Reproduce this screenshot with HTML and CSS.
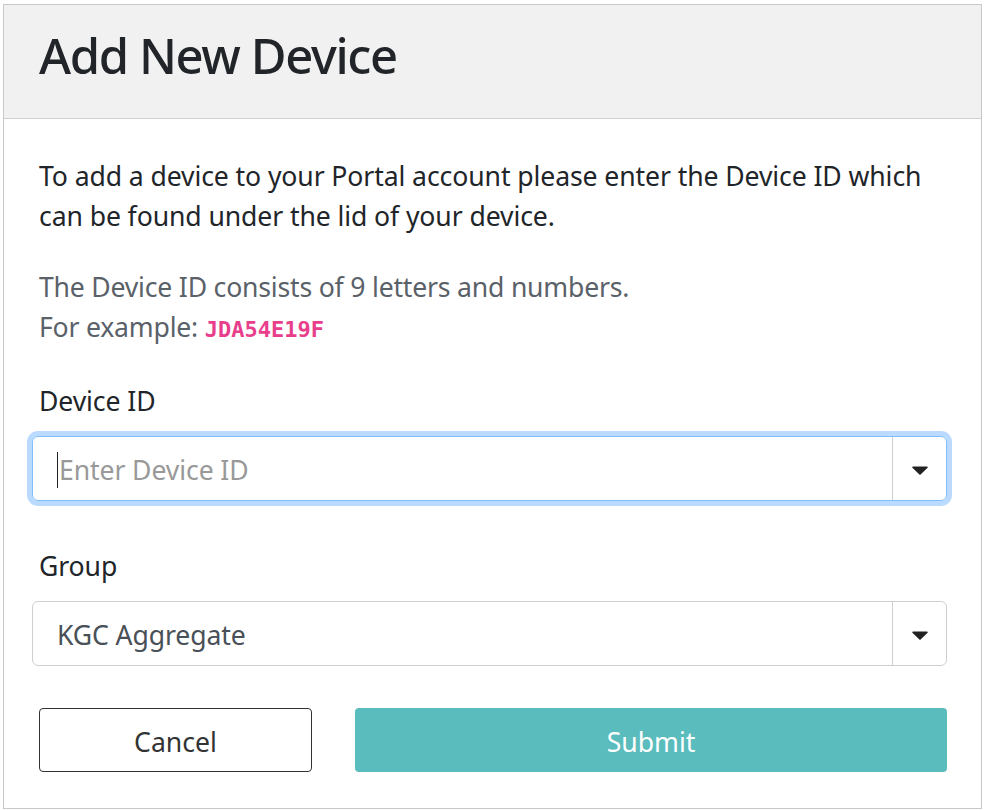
FILE: index.html
```html
<!DOCTYPE html>
<html>
<head>
    <meta name="viewport" content="width=device-width, initial-scale=1.0">
    <title>Add New Device</title>
    <link rel="stylesheet" href="styles.css">
</head>
<body>
    <div class="modal">
        <div class="modal-header">
            <h2 class="modal-title">Add New Device</h2>
        </div>
        <div class="modal-body">
            <p class="intro">To add a device to your Portal account please enter the Device ID which can be found under the lid of your device.</p>
            <p class="hint">The Device ID consists of 9 letters and numbers.<br>For example: <code>JDA54E19F</code></p>

            <div class="field">
                <label for="deviceId">Device ID</label>
                <div class="combo focused">
                    <div class="combo-input">
                        <span class="caret"></span>
                        <span class="placeholder">Enter Device ID</span>
                    </div>
                    <span class="combo-toggle">
                        <svg width="16" height="9" viewBox="0 0 16 9"><path d="M1 0.5h14a0.8 0.8 0 0 1 0.6 1.3l-7 6.6a0.9 0.9 0 0 1-1.2 0l-7-6.6A0.8 0.8 0 0 1 1 0.5z" fill="#222"/></svg>
                    </span>
                </div>
            </div>

            <div class="field">
                <label>Group</label>
                <div class="combo">
                    <div class="combo-input">
                        <span class="value">KGC Aggregate</span>
                    </div>
                    <span class="combo-toggle">
                        <svg width="16" height="9" viewBox="0 0 16 9"><path d="M1 0.5h14a0.8 0.8 0 0 1 0.6 1.3l-7 6.6a0.9 0.9 0 0 1-1.2 0l-7-6.6A0.8 0.8 0 0 1 1 0.5z" fill="#222"/></svg>
                    </span>
                </div>
            </div>

            <div class="actions">
                <button class="btn btn-cancel">Cancel</button>
                <button class="btn btn-submit">Submit</button>
            </div>
        </div>
    </div>
</body>
</html>
```

FILE: styles.css
```css
body {
    margin: 0;
    padding: 4px 0 0 3px;
    background: #fff;
    font-family: "Noto Sans", "Open Sans", sans-serif;
    color: #212529;
}
.modal {
    width: 979px;
    height: 805px;
    box-sizing: border-box;
    border: 1px solid #c8c8c8;
    background: #fff;
}
.modal-header {
    height: 114px;
    box-sizing: border-box;
    padding: 18px 0 0 35px;
    background: #f1f1f1;
    border-bottom: 1px solid #cfcfcf;
}
.modal-title {
    margin: 0;
    font-size: 49px;
    line-height: 64px;
    font-weight: 500;
    letter-spacing: -1.4px;
    color: #212529;
}
.modal-body {
    padding: 37px 34px 0 28px;
    font-size: 26.6px;
    line-height: 40px;
    letter-spacing: -0.1px;
}
.intro, .hint {
    margin: 0 0 0 7px;
}
.intro {
    margin-bottom: 31px;
}
.hint {
    color: #5a6169;
    margin-bottom: 31px;
    letter-spacing: -0.2px;
}
code {
    font-family: "DejaVu Sans Mono", "Liberation Mono", monospace;
    font-weight: bold;
    font-size: 22px;
    letter-spacing: 0;
    color: #e83e8c;
}
.field {
    margin-bottom: 45px;
}
.field label {
    display: block;
    margin: 0 0 15px 7px;
}
.combo {
    display: flex;
    height: 65px;
    box-sizing: border-box;
    border: 1px solid #cfcfcf;
    border-radius: 6px;
}
.combo.focused {
    border-color: #80bdff;
    box-shadow: 0 0 0 5px rgba(0, 123, 255, 0.27);
}
.combo-input {
    flex: 1;
    display: flex;
    align-items: center;
    padding: 3px 0 0 24px;
    color: #495057;
}
.caret {
    width: 1px;
    height: 36px;
    background: #222;
    margin-right: 1px;
}
.placeholder {
    color: #999;
}
.combo-toggle {
    width: 54px;
    display: flex;
    align-items: center;
    justify-content: center;
    border-left: 1px solid #cfcfcf;
    padding-top: 3px;
    box-sizing: border-box;
}
.actions {
    display: flex;
    gap: 43px;
    padding-left: 7px;
    margin-top: -3px;
}
.btn {
    height: 64px;
    padding-top: 4px;
    font-family: inherit;
    font-size: 26.6px;
    border-radius: 4px;
    cursor: pointer;
}
.btn-cancel {
    width: 273px;
    background: #fff;
    border: 1px solid #333;
    color: #333;
}
.btn-submit {
    flex: 1;
    background: #5bbcbd;
    border: none;
    color: #fff;
}
```
